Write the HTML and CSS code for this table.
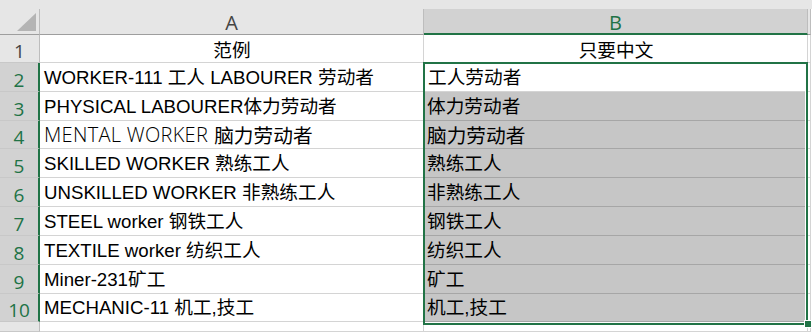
FILE: index.html
```html
<!DOCTYPE html>
<html lang="zh-CN">
<head>
<meta charset="utf-8">
<title>Sheet</title>
<link rel="stylesheet" href="styles.css">
</head>
<body>
<div class="app">
  <div class="topstrip"></div>
  <div class="sheet">
    <div class="corner">
      <svg class="tri" width="40" height="25" viewBox="0 0 40 25"><polygon points="36,4 17,22 36,22" fill="#b4b4b4"/></svg>
    </div>
    <div class="colhead">A</div>
    <div class="colhead active">B</div>
    <div class="colhead extra"></div>

    <div class="rh">1</div>
    <div class="cell center">范例</div>
    <div class="cell center">只要中文</div>
    <div class="cell extra"></div>

    <div class="rh sel">2</div>
    <div class="cell">WORKER-111 工人 LABOURER 劳动者</div>
    <div class="cell">工人劳动者</div>
    <div class="cell extra"></div>

    <div class="rh sel">3</div>
    <div class="cell">PHYSICAL LABOURER体力劳动者</div>
    <div class="cell fill">体力劳动者</div>
    <div class="cell extra"></div>

    <div class="rh sel">4</div>
    <div class="cell"><span class="light">MENTAL WORKER</span><span class="big gap">脑力劳动者</span></div>
    <div class="cell fill"><span class="big">脑力劳动者</span></div>
    <div class="cell extra"></div>

    <div class="rh sel">5</div>
    <div class="cell">SKILLED WORKER 熟练工人</div>
    <div class="cell fill">熟练工人</div>
    <div class="cell extra"></div>

    <div class="rh sel">6</div>
    <div class="cell">UNSKILLED WORKER 非熟练工人</div>
    <div class="cell fill">非熟练工人</div>
    <div class="cell extra"></div>

    <div class="rh sel">7</div>
    <div class="cell">STEEL worker 钢铁工人</div>
    <div class="cell fill">钢铁工人</div>
    <div class="cell extra"></div>

    <div class="rh sel">8</div>
    <div class="cell">TEXTILE worker 纺织工人</div>
    <div class="cell fill">纺织工人</div>
    <div class="cell extra"></div>

    <div class="rh sel">9</div>
    <div class="cell">Miner-231矿工</div>
    <div class="cell fill">矿工</div>
    <div class="cell extra"></div>

    <div class="rh sel">10</div>
    <div class="cell">MECHANIC-11 机工,技工</div>
    <div class="cell fill">机工,技工</div>
    <div class="cell extra"></div>

    <div class="rh"></div>
    <div class="cell"></div>
    <div class="cell"></div>
    <div class="cell extra"></div>

    <div class="selection"></div>
    <div class="handle"></div>
  </div>
</div>
</body>
</html>
```

FILE: styles.css
```css
html, body {
  margin: 0;
  padding: 0;
  background: #ffffff;
}

.app {
  width: 812px;
  height: 332px;
  overflow: hidden;
}

.topstrip {
  height: 9px;
  background: #e6e6e6;
}

.sheet {
  position: relative;
  display: grid;
  grid-template-columns: 40px 384px 384px 3px;
  grid-template-rows: 26px 28px 29px 29px 28px 29px 29px 29px 29px 29px 28px 10px;
  width: 811px;
}

.corner {
  background: #e6e6e6;
  border-right: 1px solid #bdbdbd;
  border-bottom: 1px solid #9e9e9e;
  box-sizing: border-box;
}

.tri {
  display: block;
}

.colhead {
  box-sizing: border-box;
  background: #e6e6e6;
  border-right: 1px solid #bdbdbd;
  border-bottom: 1px solid #9e9e9e;
  color: #444444;
  font-family: "Open Sans", "Liberation Sans", sans-serif;
  font-size: 20px;
  line-height: 20px;
  display: flex;
  align-items: flex-end;
  justify-content: center;
  padding-bottom: 1px;
}

.colhead.active {
  background: #d2d2d2;
  color: #217346;
  border-bottom: 2px solid #217346;
  padding-bottom: 0;
}

.colhead.extra {
  border-right: 1px solid #bdbdbd;
}

.rh {
  box-sizing: border-box;
  background: #e6e6e6;
  border-right: 1px solid #bdbdbd;
  border-bottom: 1px solid #c8c8c8;
  color: #444444;
  font-family: "Open Sans", "Liberation Sans", sans-serif;
  font-size: 19px;
  line-height: 19px;
  display: flex;
  align-items: flex-end;
  justify-content: center;
  padding-bottom: 1px;
}

.rh.sel {
  background: #d2d2d2;
  color: #217346;
  border-right: 2px solid #217346;
}

.cell {
  box-sizing: border-box;
  border-right: 1px solid #d4d4d4;
  border-bottom: 1px solid #d4d4d4;
  display: flex;
  align-items: flex-end;
  padding: 0 3px 4px 4px;
  white-space: nowrap;
  overflow: hidden;
  color: #000000;
  font-family: "Liberation Sans", "Noto Sans CJK SC", sans-serif;
  font-size: 18.67px;
  line-height: 18px;
}

.cell.center {
  justify-content: center;
  font-family: "Noto Sans CJK SC", sans-serif;
}

.cell.fill {
  background: #c6c6c6;
  border-right-color: #a6a6a6;
  border-bottom-color: #a6a6a6;
  padding-left: 3px;
}

.cell.extra {
  padding: 0;
}

.light {
  font-family: "Open Sans", "Liberation Sans", sans-serif;
  font-weight: 350;
  font-size: 20px;
  letter-spacing: 0.3px;
  color: #000000;
}

.big {
  font-family: "Noto Sans CJK SC", sans-serif;
  font-size: 19.7px;
}

.big.gap {
  margin-left: 6px;
}

.selection {
  position: absolute;
  left: 423px;
  top: 53px;
  width: 385px;
  height: 263px;
  box-sizing: border-box;
  border: 2px solid #217346;
  box-shadow: inset -1px -1px 0 #ffffff;
  pointer-events: none;
}

.handle {
  position: absolute;
  left: 804px;
  top: 311px;
  width: 6px;
  height: 6px;
  background: #217346;
  border: 1px solid #ffffff;
}
```
